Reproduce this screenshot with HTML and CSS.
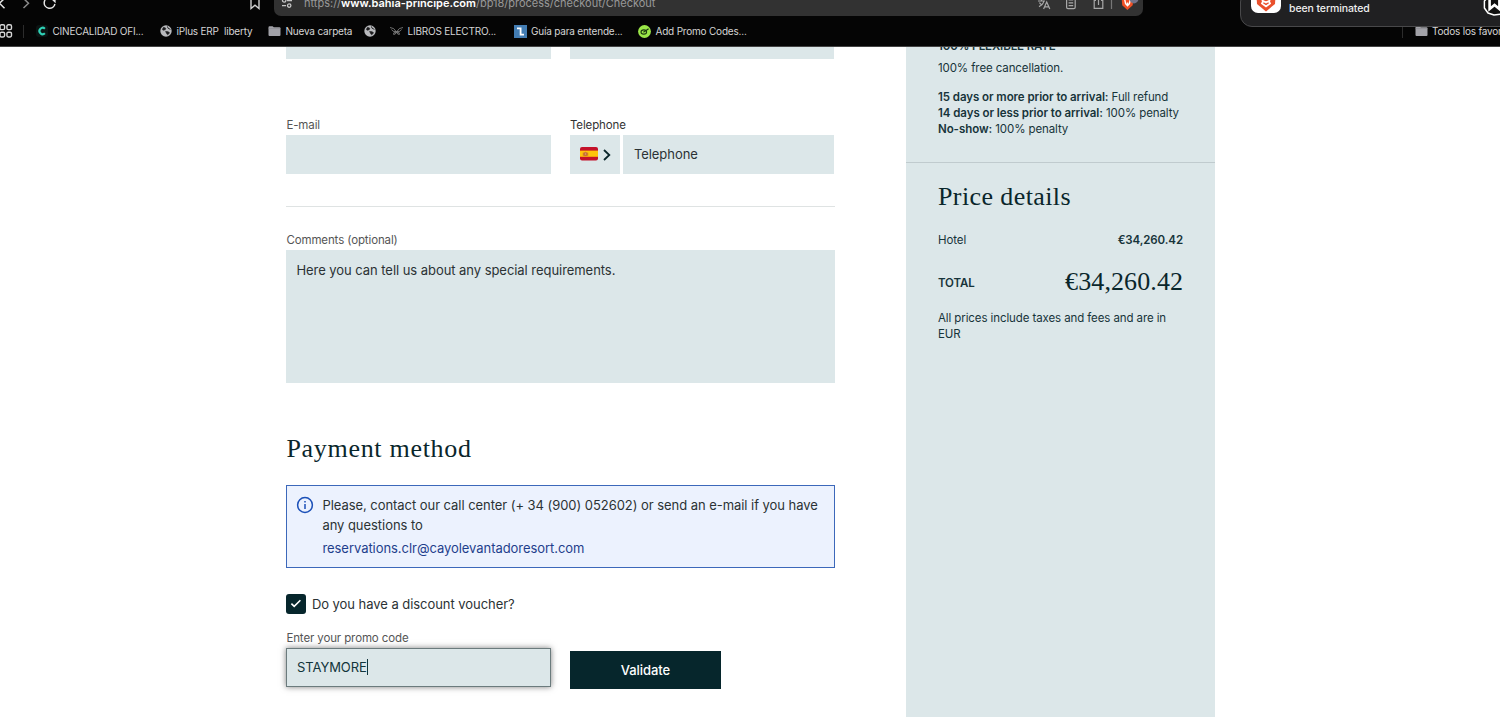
FILE: index.html
```
<!doctype html>
<html lang="en">
<head>
    <meta charset="UTF-8">
    <meta name="viewport" content="width=device-width, initial-scale=1.0">
    <title>Checkout</title>
    <link rel="stylesheet" href="styles.css">
</head>
<body>
<svg width="0" height="0" class="defs">
    <symbol id="globe" viewBox="0 0 12 12">
        <circle cx="6" cy="6" r="5.7" fill="#b9babd"/>
        <path d="M3.6 2.2 5.8 3.2 5.2 4.8 3 5.2 2.4 4.2ZM5.6 6.4 8.4 6.8 9.6 8 7.6 9.8 6.6 8.6Z" fill="#1c1c1e" stroke="#1c1c1e" stroke-width=".6"/>
        <path d="M7.4 1.4 8 3.2 10.4 4.4" fill="none" stroke="#1c1c1e" stroke-width=".9"/>
    </symbol>
    <symbol id="folder" viewBox="0 0 13 12">
        <path d="M.5 2.2Q.5 1.2 1.5 1.2H4.6L5.8 2.3H11.5Q12.5 2.3 12.5 3.3V10Q12.5 11 11.5 11H1.5Q.5 11 .5 10Z" fill="#a2a2a8"/>
        <path d="M.5 3.6H12.5" stroke="#86868c" stroke-width=".6"/>
    </symbol>
</svg>
<header class="browser">
    <div class="toolbar">
        <svg class="nav-icons" width="60" height="26" viewBox="0 -10 60 26" fill="none" stroke-width="1.5">
            <path d="M5-2-.5 3.2 4.5 8.2" stroke="#e6e6e6"/>
            <path d="M23-2 28.5 3.2 23.5 8" stroke="#8a8a8a"/>
            <path d="M50-2.5A5.4 5.4 0 1 0 54.9 4" stroke="#e6e6e6"/>
            <path d="M51-1H55.6V3.2Z" fill="#e6e6e6"/>
        </svg>
        <svg class="save-icon" width="12" height="26" viewBox="0 -10 12 26" fill="none">
            <path d="M2-4H10V8.6L6 5.2 2 8.6Z" stroke="#d0d0d0" stroke-width="1.4"/>
        </svg>
        <div class="address">
            <svg width="12" height="26" viewBox="0 -10 12 26" fill="none" stroke="#c6c6c6" stroke-width="1.3">
                <path d="M6 .5H11M1 5.6H5"/><circle cx="3.2" cy=".4" r="1.7"/><circle cx="8.2" cy="5.6" r="1.7"/>
            </svg>
            <span class="url">https://<b>www.bahia-principe.com</b>/bp18/process/checkout/Checkout</span>
            <svg class="address-icons" width="106" height="26" viewBox="0 -10 106 26" fill="none" stroke="#a8a8a8" stroke-width="1.2">
                <path d="M1 1H8M4.5-1V1M2 6.6Q6.4 4.5 6.8 1M2.4 2.6 5 5.4M6.6 9 9.7 2 12.8 9M7.8 6.8H11.6"/>
                <rect x="29.6" y="-3" width="8.6" height="11.6" rx="1.4"/>
                <path d="M31.6 0H36.2M31.6 2.8H36.2M31.6 5.6H36.2"/>
                <path d="M59 .4H57.2V8.4H65.8V.4H64M61.5 5V-4"/>
                <path d="M74.5-6V9" stroke="#777"/>
                <path d="M84.5-4H96.5L95.7 5.2 90.4 10 85.2 5.2Z" fill="#ee5127" stroke="none"/>
                <path d="M87.6-1 88.6 3.6 90.5 5.8 92.4 3.6 93.4-1M90.5 2.4V5.8" stroke="#fff" stroke-width="1.4"/>
                <circle cx="97" cy="-1" r="4.4" fill="#74748a" stroke="none"/>
            </svg>
        </div>
    </div>
    <nav class="bookmarks">
        <div class="apps">
            <svg width="14" height="14" viewBox="0 0 14 14" fill="none" stroke="#d6d6d6" stroke-width="1.4">
                <rect x="0" y=".8" width="4.6" height="4.8" rx="1.4"/><rect x="6.9" y=".8" width="4.6" height="4.8" rx="1.4"/>
                <rect x="0" y="8.2" width="4.6" height="4.8" rx="1.4"/><rect x="6.9" y="8.2" width="4.6" height="4.8" rx="1.4"/>
            </svg>
            <i class="bar"></i>
        </div>
        <a class="bookmark">
            <svg width="12" height="12" viewBox="0 0 12 12"><rect width="12" height="12" rx="3" fill="#0b1413"/><path d="M8.9 3.7A3.2 3.2 0 1 0 8.9 8.3" fill="none" stroke="#2fd0b5" stroke-width="2.1"/></svg>
            <span>CINECALIDAD OFI...</span>
        </a>
        <a class="bookmark"><svg width="12" height="12"><use href="#globe"/></svg><span>iPlus ERP&nbsp; liberty</span></a>
        <a class="bookmark"><svg width="13" height="12"><use href="#folder"/></svg><span>Nueva carpeta</span></a>
        <a class="bookmark"><svg width="12" height="12"><use href="#globe"/></svg></a>
        <a class="bookmark">
            <svg width="13" height="12" viewBox="0 0 13 12" fill="none" stroke="#8b8b8b" stroke-width=".8"><path d="M0 2.5Q4 2.4 6.5 7 9 2.4 13 2.5M1.5 4.5Q2.5 7 6 6.6M11.5 4.5Q10.5 7 7 6.6M6.5 7Q2.6 7.5 3.6 9.4 5.4 10 6.5 7 7.6 10 9.4 9.4 10.4 7.5 6.5 7"/></svg>
            <span>LIBROS ELECTRO...</span>
        </a>
        <a class="bookmark">
            <svg width="13" height="13" viewBox="0 0 13 13"><rect width="13" height="13" fill="#437db3"/><path d="M3 3.4H6.6V9.6H10" fill="none" stroke="#fff" stroke-width="1.8"/></svg>
            <span>Guía para entende...</span>
        </a>
        <a class="bookmark">
            <svg width="13" height="13" viewBox="0 0 13 13" fill="none"><circle cx="6.5" cy="6.5" r="6.4" fill="#9be748"/><ellipse cx="5.8" cy="7" rx="2.8" ry="2.1" stroke="#1c3a10" stroke-width="1.1"/><path d="M5.4 7.2 10.6 3.8" stroke="#1c3a10" stroke-width="1.2"/></svg>
            <span>Add Promo Codes...</span>
        </a>
        <a class="bookmark all"><i class="bar"></i><svg width="13" height="12"><use href="#folder"/></svg><span>Todos los favoritos</span></a>
    </nav>
    <div class="notification">
        <svg width="30" height="27" viewBox="0 -14 30 27">
            <rect y="-17" width="30" height="30" rx="7" fill="#fff"/>
            <path d="M5-10H25L24 4 15 11.4 6 4Z" fill="#e9502c"/>
            <path d="M9-4 12 1 11 3.4 15 6.4 19 3.4 18 1 21-4M12 1 15 2.4 18 1" fill="none" stroke="#fff" stroke-width="1.8"/>
        </svg>
        <span>been terminated</span>
        <svg class="watermark" width="18" height="27" viewBox="0 -10 18 27">
            <path d="M6-4 1.4 1V8L5 13 11 15 18 14V-6Z" fill="#111" stroke="#fff" stroke-width="1.5" stroke-linejoin="round"/>
            <path d="M6.6-2V9L11.5 5 16.4 9V-2" fill="none" stroke="#fff" stroke-width="2.6"/>
        </svg>
    </div>
</header>
<div class="page">
    <main class="form">
        <div class="row previous">
            <div class="field"></div>
            <div class="field"></div>
        </div>
        <div class="row contact">
            <div class="group">
                <label>E-mail</label>
                <div class="field"></div>
            </div>
            <div class="group">
                <label class="dark">Telephone</label>
                <div class="phone">
                    <div class="field prefix">
                        <svg width="18" height="14" viewBox="0 0 18 14">
                            <rect width="18" height="13.4" rx="2" fill="#c4122a"/><path d="M0 3.6H18V9.8H0Z" fill="#ffc40c"/>
                            <path d="M3.3 8.8V5.6M7.7 8.8V5.6M4.3 8.6V5.8Q5.5 4.8 6.7 5.8V8.6Z" fill="#d98c63" stroke="#b4552f" stroke-width=".7"/>
                        </svg>
                        <svg class="chevron" width="8" height="12" viewBox="0 0 8 12"><path d="M1 1 6.3 6 1 11" fill="none" stroke="#0a262b" stroke-width="1.8"/></svg>
                    </div>
                    <div class="field number">Telephone</div>
                </div>
            </div>
        </div>
        <div class="comments">
            <label>Comments (optional)</label>
            <div class="field area">Here you can tell us about any special requirements.</div>
        </div>
        <h2>Payment method</h2>
        <div class="alert">
            <svg width="18" height="18" viewBox="0 0 18 18" fill="none" stroke="#1b50b8">
                <circle cx="9" cy="9" r="7.4" stroke-width="1.5"/><path d="M9 8V13M9 5V6.6" stroke-width="1.5"/>
            </svg>
            <div class="alert-text">
                <p>Please, contact our call center (+ 34 (900) 052602) or send an e-mail if you have<br>any questions to</p>
                <a>reservations.clr@cayolevantadoresort.com</a>
            </div>
        </div>
        <div class="voucher">
            <span class="check"><svg width="12" height="10" viewBox="0 0 12 10"><path d="M1.4 4.6 4.2 7.4 10.4 1.2" fill="none" stroke="#fff" stroke-width="1.6"/></svg></span>
            <span>Do you have a discount voucher?</span>
        </div>
        <div class="row promo">
            <div class="group">
                <label>Enter your promo code</label>
                <div class="field focused"><span>STAYMORE</span><i class="caret"></i></div>
            </div>
            <div class="button">Validate</div>
        </div>
    </main>
    <aside class="summary">
        <section class="rate">
            <h4>100% FLEXIBLE RATE</h4>
            <p class="free">100% free cancellation.</p>
            <p><b>15 days or more prior to arrival:</b> Full refund<br><b>14 days or less prior to arrival:</b> 100% penalty<br><b>No-show:</b> 100% penalty</p>
        </section>
        <section class="price">
            <h3>Price details</h3>
            <div class="line"><span>Hotel</span><b>€34,260.42</b></div>
            <div class="line total"><b>TOTAL</b><span class="amount">€34,260.42</span></div>
            <p class="note">All prices include taxes and fees and are in<br>EUR</p>
        </section>
    </aside>
</div>
</body>
</html>
```
FILE: styles.css
```
*{ box-sizing: border-box; }
body{ margin: 0; height: 717px; overflow: hidden; background: #fff; color: #2b3234; font-family: Inter, "Liberation Sans", sans-serif; font-size: 13px; letter-spacing: -0.05px; white-space: nowrap; }
h2, h3, h4, p{ margin: 0; }
b{ font-weight: 600; }
svg{ display: block; flex: none; }
.defs{ position: absolute; }

/* browser bar */
.browser{ position: relative; height: 47px; overflow: hidden; background: #050505; border-bottom: 1px solid #444; }
.toolbar{ display: flex; align-items: center; height: 36px; margin-top: -15px; }
.nav-icons{ margin-right: 189px; }
.save-icon{ margin-right: 13px; }
.address{ display: flex; align-items: center; width: 869px; height: 25px; padding-left: 7px; background: #323232; border-radius: 7px; }
.url{ margin-left: 11px; width: 733px; color: #999; font-size: 11px; letter-spacing: 0; }
.url b{ color: #fff; }
.bookmarks{ display: grid; grid-template-columns: 36px 124px 108px 96px 26px 123.5px 124.5px 764px 120px; align-items: center; height: 20px; color: #d5d5d5; font-size: 10px; letter-spacing: -0.2px; }
.apps, .bookmark{ display: flex; align-items: center; gap: 4.5px; }
.apps{ gap: 9px; }
.bar{ width: 1px; height: 13px; background: #2c2c2c; }
.bookmark.all .bar{ margin-right: 7px; }
.notification{ position: absolute; left: 1240px; top: -10px; display: flex; align-items: flex-end; width: 280px; height: 37px; padding: 0 0 0 10px; background: #202022; border: 1px solid #48484a; border-radius: 12px; color: #eee; font-size: 10.5px; font-weight: 500; letter-spacing: -0.1px; }
.notification svg{ margin-bottom: 13px; }
.notification span{ margin: 0 0 11px 8px; width: 190px; }
.notification .watermark{ margin: 0 0 9px 4px; }

/* page */
.page{ display: flex; gap: 71px; height: 670px; padding-left: 286.4px; }
.form{ width: 548.6px; }
.row{ display: flex; gap: 19px; }
.field{ display: flex; align-items: center; height: 38.5px; background: #dce7e9; }
.previous .field{ width: 264.5px; height: 12px; }
label{ display: block; height: 17px; color: #555; font-size: 11.5px; line-height: 15px; letter-spacing: -0.12px; }
label.dark{ color: #333; }
.group{ width: 264.5px; }
.contact{ height: 89px; margin-top: 59px; border-bottom: 1px solid #dfe3e3; }
.phone{ display: flex; gap: 3px; }
.prefix{ width: 50px; padding-left: 10px; gap: 5px; }
.chevron{ margin-top: 2px; }
.number{ flex: 1; padding-left: 11px; }
.comments{ margin-top: 26px; }
.area{ align-items: flex-start; height: 133px; padding: 12px 10px; }
h2, h3, .amount{ color: #0a262b; font-family: "Liberation Serif", serif; font-weight: 400; font-size: 26px; line-height: 32px; letter-spacing: 0.4px; }
h2{ margin-top: 50px; letter-spacing: 0.7px; }
.amount{ margin-right: -0.1px; letter-spacing: 0.1px; }
.alert{ display: flex; gap: 8px; height: 83px; margin-top: 20px; padding: 10px 9px; background: #ecf2fe; border: 1px solid #3c68ba; line-height: 19.5px; }
.alert a{ display: block; margin-top: 4px; color: #1f3f8c; }
.voucher{ display: flex; align-items: center; gap: 6px; margin-top: 26px; height: 20px; }
.check{ display: flex; align-items: center; justify-content: center; width: 19.5px; height: 19.5px; background: #06262c; border-radius: 3px; }
.promo{ margin-top: 17px; }
.focused{ padding-left: 9.5px; border: 1px solid #6b7b7d; box-shadow: 0 0 6px rgba(0, 0, 0, .5); color: #12353b; }
.caret{ width: 1px; height: 16px; background: #12353b; }
.button{ display: flex; align-items: center; justify-content: center; width: 151px; height: 38.5px; margin-top: 19.5px; background: #06262c; color: #fff; font-weight: 500; }

/* summary column */
.summary{ width: 309px; background: #dce7e9; color: #17343a; font-size: 11.5px; line-height: 16px; letter-spacing: -0.1px; }
.rate{ height: 116px; padding: 0 32px; border-bottom: 1px solid #c0cbce; overflow: hidden; }
.rate b{ letter-spacing: -0.06px; }
.rate h4{ margin-top: -9px; font-size: 11.5px; font-weight: 600; }
.free{ margin: 6px 0 13px; }
.price{ padding: 18px 32px 0; }
.line{ display: flex; align-items: center; justify-content: space-between; height: 20px; margin-top: 17px; }
.total{ height: 32px; margin-top: 16px; }
.total b{ margin-top: 2px; }
.note{ margin-top: 12px; }
```
